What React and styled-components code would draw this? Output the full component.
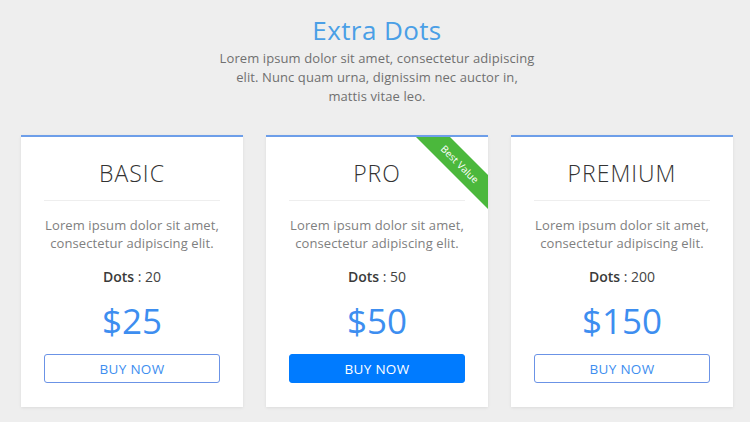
import React from 'react'
import styled, { createGlobalStyle } from 'styled-components'

const GlobalStyle = createGlobalStyle`
  html, body {
    margin: 0;
    padding: 0;
    background-color: #eeeeee;
  }
  body {
    font-family: 'Open Sans', 'Noto Sans', sans-serif;
  }
  * {
    box-sizing: border-box;
  }
`

const Page = styled.div`
  width: 750px;
  height: 422px;
  padding: 14px 17px 0 21px;
  overflow: hidden;
`

const Header = styled.header`
  display: flex;
  flex-direction: column;
  align-items: center;
  text-align: center;
`

const Title = styled.h1`
  margin: 0;
  font-size: 26px;
  line-height: 32px;
  font-weight: 400;
  letter-spacing: 0.4px;
  color: #4a9fe6;
`

const Subtitle = styled.p`
  margin: 3px 0 0 0;
  font-size: 13px;
  line-height: 19px;
  letter-spacing: 0.1px;
  color: #707070;
`

const CardRow = styled.div`
  display: grid;
  grid-template-columns: repeat(3, 222px);
  gap: 23px;
  margin-top: 29px;
`

const Card = styled.div`
  position: relative;
  overflow: hidden;
  display: flex;
  flex-direction: column;
  align-items: stretch;
  text-align: center;
  background-color: #ffffff;
  border-top: 2px solid #6d9ee9;
  padding: 0 23px 24px 23px;
  box-shadow: 0 1px 3px rgba(0, 0, 0, 0.08);
`

const Ribbon = styled.div`
  position: absolute;
  top: 15px;
  left: 139px;
  width: 110px;
  height: 24px;
  background-color: #4bb83c;
  color: #ffffff;
  font-size: 10px;
  line-height: 24px;
  text-align: center;
  transform: rotate(45deg);
`

const PlanName = styled.h2`
  margin: 21px 0 0 0;
  font-size: 23px;
  line-height: 30px;
  font-weight: 300;
  letter-spacing: 1px;
  color: #333333;
`

const Divider = styled.hr`
  margin: 12px 0 0 0;
  border: none;
  height: 1px;
  background-color: #eeeeee;
`

const Description = styled.p`
  margin: 15px 0 0 0;
  font-size: 13px;
  line-height: 18px;
  letter-spacing: 0.1px;
  color: #808080;
`

const Dots = styled.div`
  margin-top: 15px;
  font-size: 14px;
  line-height: 20px;
  color: #444444;

  strong {
    font-weight: 600;
    color: #3a3a3a;
  }
`

const Price = styled.div`
  margin-top: 14px;
  font-size: 35px;
  line-height: 40px;
  font-weight: 400;
  color: #3d8ef0;
`

const BuyButton = styled.button`
  margin-top: 13px;
  height: 29px;
  border-radius: 3px;
  border: 1px solid ${p => (p.$filled ? '#007bff' : '#6b93e6')};
  background-color: ${p => (p.$filled ? '#007bff' : '#ffffff')};
  color: ${p => (p.$filled ? '#ffffff' : '#3d8ef0')};
  font-family: inherit;
  font-size: 13.5px;
  letter-spacing: 0.3px;
  cursor: pointer;
`

const plans = [
  { name: 'BASIC', dots: 20, price: '$25' },
  { name: 'PRO', dots: 50, price: '$50', best: true },
  { name: 'PREMIUM', dots: 200, price: '$150' },
]

export default () => {
  return (
    <>
      <GlobalStyle />
      <Page>
        <Header>
          <Title>Extra Dots</Title>
          <Subtitle>
            Lorem ipsum dolor sit amet, consectetur adipiscing<br />
            elit. Nunc quam urna, dignissim nec auctor in,<br />
            mattis vitae leo.
          </Subtitle>
        </Header>
        <CardRow>
          {plans.map(plan => (
            <Card key={plan.name}>
              {plan.best && <Ribbon>Best Value</Ribbon>}
              <PlanName>{plan.name}</PlanName>
              <Divider />
              <Description>
                Lorem ipsum dolor sit amet,<br />
                consectetur adipiscing elit.
              </Description>
              <Dots>
                <strong>Dots</strong> : {plan.dots}
              </Dots>
              <Price>{plan.price}</Price>
              <BuyButton $filled={plan.best}>BUY NOW</BuyButton>
            </Card>
          ))}
        </CardRow>
      </Page>
    </>
  )
}
